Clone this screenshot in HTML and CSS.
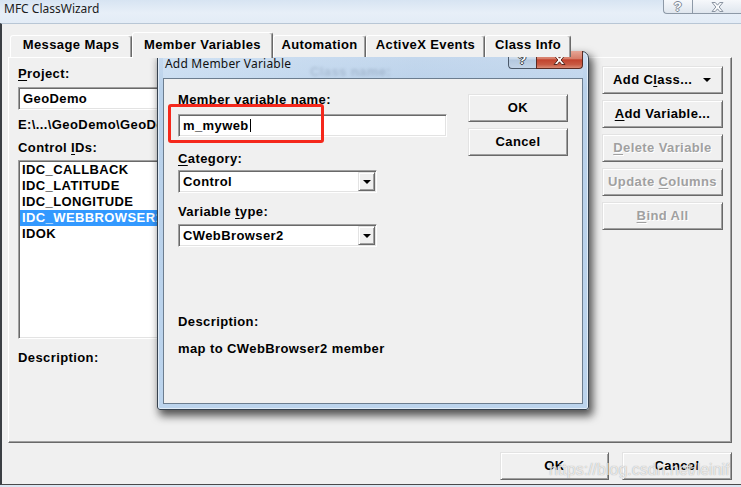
FILE: index.html
```html
<!DOCTYPE html>
<html>
<head>
<meta charset="utf-8">
<title>MFC ClassWizard</title>
<link rel="stylesheet" href="styles.css">
</head>
<body>
<div class="window">
  <div class="titlebar">
    <span class="title">MFC ClassWizard</span>
    <div class="caps">
      <span class="cap cap-help">?</span>
      <span class="cap cap-close">
        <svg width="13" height="10" viewBox="0 0 14 11"><polygon points="1,0.5 4.5,0.5 7,3.5 9.5,0.5 13,0.5 8.8,5.5 13,10.5 9.5,10.5 7,7.5 4.5,10.5 1,10.5 5.2,5.5" fill="#fbfcfd" stroke="#7d8896" stroke-width="1"/></svg>
      </span>
    </div>
  </div>
  <div class="client">
    <div class="tabs">
      <div class="tab t1">Message Maps</div>
      <div class="tab t2 active">Member Variables</div>
      <div class="tab t3">Automation</div>
      <div class="tab t4">ActiveX Events</div>
      <div class="tab t5">Class Info</div>
    </div>
    <div class="panel">
      <div class="main">
        <div class="lbl"><u>P</u>roject:</div>
        <div class="sunken combo project">GeoDemo</div>
        <div class="lbl path">E:\...\GeoDemo\GeoDemoDlg.h</div>
        <div class="lbl gap7">Control <u>I</u>Ds:</div>
        <div class="sunken listbox">
          <div class="item">IDC_CALLBACK</div>
          <div class="item">IDC_LATITUDE</div>
          <div class="item">IDC_LONGITUDE</div>
          <div class="item selected">IDC_WEBBROWSER1</div>
          <div class="item">IDOK</div>
        </div>
        <div class="lbl desc">Description:</div>
      </div>
      <div class="btns">
        <div class="btn split"><span>Add C<u>l</u>ass...</span><span class="tri"></span></div>
        <div class="btn"><span><u>A</u>dd Variable...</span></div>
        <div class="btn disabled"><span><u>D</u>elete Variable</span></div>
        <div class="btn disabled"><span>Update <u>C</u>olumns</span></div>
        <div class="btn disabled"><span><u>B</u>ind All</span></div>
      </div>
    </div>
    <div class="footer">
      <div class="btn ok-main">OK</div>
      <div class="btn cancel-main">Cancel</div>
    </div>
  </div>
</div>

<div class="dialog">
  <span class="ghost">Class name:</span>
  <div class="dlg-title">
    <span class="dlg-title-text">Add Member Variable</span>
    <div class="dlg-caps">
      <span class="dcap dcap-help">?</span>
      <span class="dcap dcap-close">
        <svg width="13" height="10" viewBox="0 0 14 11"><polygon points="1,0.5 4.5,0.5 7,3.5 9.5,0.5 13,0.5 8.8,5.5 13,10.5 9.5,10.5 7,7.5 4.5,10.5 1,10.5 5.2,5.5" fill="#ffffff" stroke="#4a1c14" stroke-width="1"/></svg>
      </span>
    </div>
  </div>
  <div class="dlg-client">
    <div class="dlg-left">
      <div class="lbl">Member variable <u>n</u>ame:</div>
      <div class="sunken edit">m_myweb<span class="caret"></span></div>
      <div class="lbl cat-lbl"><u>C</u>ategory:</div>
      <div class="sunken dcombo">Control<span class="dropbtn"><span class="tri"></span></span></div>
      <div class="lbl type-lbl">Variable <u>t</u>ype:</div>
      <div class="sunken dcombo type-combo">CWebBrowser2<span class="dropbtn"><span class="tri"></span></span></div>
      <div class="lbl ddesc">Description:</div>
      <div class="lbl dmap">map to CWebBrowser2 member</div>
    </div>
    <div class="dlg-right">
      <div class="btn dbtn">OK</div>
      <div class="btn dbtn">Cancel</div>
    </div>
  </div>
</div>

<div class="highlight"></div>
<div class="watermark">https://blog.csdn.net/leinif</div>
</body>
</html>
```

FILE: styles.css
```css
* { box-sizing: border-box; }
html, body { margin: 0; padding: 0; }
body {
  width: 741px;
  height: 487px;
  overflow: hidden;
  position: relative;
  background: #dbe6f2;
  font-family: "Liberation Sans", Arial, sans-serif;
  font-size: 13px;
  font-weight: bold;
  letter-spacing: 0.4px;
  color: #000;
}
u { text-decoration: underline; text-underline-offset: 2px; }

/* ---------- outer window ---------- */
.window {
  width: 741px;
  height: 485px;
  display: flex;
  flex-direction: column;
}
.titlebar {
  height: 23px;
  display: flex;
  align-items: flex-start;
  background: linear-gradient(180deg, #d7e4f2 0%, #e7eff8 55%, #e3ecf6 100%);
}
.title {
  font-family: "Noto Sans", "DejaVu Sans", sans-serif;
  font-weight: normal;
  font-size: 12px;
  letter-spacing: 0;
  line-height: 16px;
  padding: 1px 0 0 4px;
  color: #1c1c1c;
}
.caps { margin-left: auto; display: flex; height: 14px; }
.cap {
  height: 14px;
  border: 1px solid #8d99a7;
  border-top: none;
  background: linear-gradient(180deg, #f6f8fb, #dfe6ee);
  display: flex;
  align-items: center;
  justify-content: center;
}
.cap-help {
  width: 29px;
  border-right: none;
  border-radius: 0 0 0 4px;
  color: #fbfcfd;
  font-size: 13px;
  line-height: 13px;
  text-shadow: 1px 0 #7d8896, -1px 0 #7d8896, 0 1px #7d8896, 0 -1px #7d8896;
}
.cap-close { width: 49px; border-right: none; }

.client {
  flex: 1;
  background: #f0f0f0;
  border-left: 2px solid #3b3f44;
  border-top: 1px solid #b8c6d5;
  border-bottom: 1px solid #4a4a4a;
  padding-top: 8px;
  display: flex;
  flex-direction: column;
}

/* tabs */
.tabs {
  display: flex;
  align-items: flex-end;
  height: 25px;
  margin-left: 8px;
  position: relative;
  z-index: 1;
}
.tab {
  height: 22px;
  border: 1px solid;
  border-bottom: none;
  border-color: #fff #696969 transparent #fff;
  border-radius: 3px 3px 0 0;
  box-shadow: inset -1px 0 #a0a0a0;
  background: #f0f0f0;
  padding-top: 1px;
  line-height: 16px;
  text-align: center;
  white-space: nowrap;
}
.tab.active { height: 26px; margin-bottom: -1px; padding-top: 4px; }
.t1 { width: 122px; }
.t2 { width: 141px; }
.t3 { width: 93px; }
.t4 { width: 119px; }
.t5 { width: 86px; }

.panel {
  margin-left: 6px;
  width: 724px;
  height: 386px;
  border: 1px solid;
  border-color: #fff #696969 #696969 #fff;
  box-shadow: inset -1px -1px #a0a0a0;
  display: flex;
  gap: 9px;
  padding: 8px 8px 0 9px;
}
.main {
  flex: 1;
  min-width: 0;
  display: flex;
  flex-direction: column;
  align-items: flex-start;
}
.lbl { line-height: 16px; white-space: nowrap; }
.sunken {
  background: #fff;
  border: 1px solid;
  border-color: #a0a0a0 #fff #fff #a0a0a0;
  box-shadow: inset 1px 1px #696969, inset -1px -1px #e3e3e3;
}
.combo {
  margin-top: 5px;
  width: 280px;
  height: 23px;
  line-height: 21px;
  padding: 0 4px;
}
.path { margin-top: 7px; }
.gap7 { margin-top: 7px; }
.listbox {
  margin-top: 4px;
  width: 570px;
  height: 179px;
  padding: 1px;
}
.item { line-height: 16px; padding-left: 2px; white-space: nowrap; }
.item.selected { background: #3399ff; color: #fff; }
.desc { margin-top: 11px; }

/* buttons */
.btns { width: 121px; display: flex; flex-direction: column; gap: 6px; }
.btn {
  height: 28px;
  background: #f0f0f0;
  border: 1px solid;
  border-color: #e3e3e3 #696969 #696969 #e3e3e3;
  box-shadow: inset 1px 1px #fff, inset -1px -1px #a0a0a0;
  display: flex;
  align-items: center;
  justify-content: center;
  line-height: 16px;
  white-space: nowrap;
}
.btn.split { justify-content: space-between; padding: 0 11px 0 10px; }
.tri {
  display: inline-block;
  width: 0;
  height: 0;
  border-left: 4px solid transparent;
  border-right: 4px solid transparent;
  border-top: 4px solid #000;
}
.btn.disabled { color: #a0a0a0; text-shadow: 1px 1px 0 #fff; }

.footer {
  margin-left: 6px;
  width: 724px;
  display: flex;
  justify-content: flex-end;
  gap: 13px;
  padding-top: 9px;
}
.ok-main { width: 109px; }
.cancel-main { width: 110px; }

/* ---------- dialog window (floats over the wizard) ---------- */
.dialog {
  position: absolute;
  left: 157px;
  top: 51px;
  width: 432px;
  height: 359px;
  border: 1px solid #36424f;
  border-radius: 7px 7px 3px 3px;
  background: linear-gradient(180deg, #c8dbf0 0%, #b9d1ea 10%, #bcd4ed 100%);
  box-shadow: 3px 5px 9px 1px rgba(0, 0, 0, 0.65), inset 0 0 0 1px rgba(255, 255, 255, 0.55);
  padding: 0 5px 5px;
  display: flex;
  flex-direction: column;
}
.ghost {
  position: absolute;
  left: 152px;
  top: 12px;
  color: rgba(60, 80, 110, 0.35);
  filter: blur(1.4px);
}
.dlg-title {
  height: 26px;
  display: flex;
  align-items: flex-start;
  position: relative;
  background: linear-gradient(90deg, rgba(214,230,246,0.6), rgba(190,210,232,0.3) 60%, rgba(200,218,238,0.5));
}
.dlg-title-text {
  font-family: "Noto Sans", "DejaVu Sans", sans-serif;
  font-weight: normal;
  font-size: 12px;
  letter-spacing: 0.2px;
  line-height: 23px;
  padding-left: 2px;
  color: #111;
}
.dlg-caps { margin-left: auto; margin-top: -1px; display: flex; height: 18px; }
.dcap {
  height: 18px;
  border: 1px solid #4b596a;
  border-top: none;
  display: flex;
  align-items: center;
  justify-content: center;
}
.dcap-help {
  width: 28px;
  border-right: none;
  border-radius: 0 0 0 4px;
  background: linear-gradient(180deg, #e2ebf5 0%, #cad9ea 48%, #b3c7de 52%, #c3d4e7 100%);
  color: #fff;
  font-size: 13px;
  line-height: 13px;
  text-shadow: 1px 0 #3a3f46, -1px 0 #3a3f46, 0 1px #3a3f46, 0 -1px #3a3f46;
}
.dcap-close {
  width: 47px;
  border-color: #5a2a22;
  border-radius: 0 0 4px 0;
  background: linear-gradient(180deg, #e6a696 0%, #d67d69 45%, #c2432e 52%, #c85a43 80%, #d98a74 100%);
}
.dlg-client {
  flex: 1;
  background: #f0f0f0;
  border: 1px solid #6c7d8f;
  display: flex;
  padding: 13px 0 0 14px;
}
.dlg-left { width: 269px; display: flex; flex-direction: column; align-items: flex-start; }
.edit {
  margin-top: 6px;
  width: 269px;
  height: 23px;
  line-height: 21px;
  padding: 0 4px;
  display: flex;
  align-items: center;
}
.caret { display: inline-block; width: 1px; height: 13px; background: #000; margin-left: 1px; }
.cat-lbl { margin-top: 14px; }
.dcombo {
  margin-top: 3px;
  width: 199px;
  height: 23px;
  line-height: 21px;
  padding: 0 1px 0 4px;
  display: flex;
  align-items: center;
  justify-content: space-between;
}
.type-lbl { margin-top: 11px; }
.type-combo { margin-top: 4px; }
.dropbtn {
  width: 17px;
  height: 19px;
  background: #f0f0f0;
  border: 1px solid;
  border-color: #e3e3e3 #696969 #696969 #e3e3e3;
  box-shadow: inset 1px 1px #fff, inset -1px -1px #a0a0a0;
  display: flex;
  align-items: center;
  justify-content: center;
}
.ddesc { margin-top: 67px; }
.dmap { margin-top: 11px; }
.dlg-right {
  margin-left: 21px;
  margin-top: 2px;
  width: 100px;
  display: flex;
  flex-direction: column;
  gap: 6px;
}

/* ---------- annotation & watermark overlays ---------- */
.highlight {
  position: absolute;
  left: 168px;
  top: 104px;
  width: 156px;
  height: 39px;
  border: 3px solid #f5281c;
  border-radius: 3px;
}
.watermark {
  position: absolute;
  left: 549px;
  top: 461px;
  font-family: "Liberation Sans", Arial, sans-serif;
  font-weight: normal;
  font-size: 16px;
  letter-spacing: 0;
  line-height: 18px;
  color: rgba(255, 255, 255, 0.75);
  text-shadow: 0 0 1px rgba(110, 110, 110, 0.7);
  white-space: nowrap;
}
```
